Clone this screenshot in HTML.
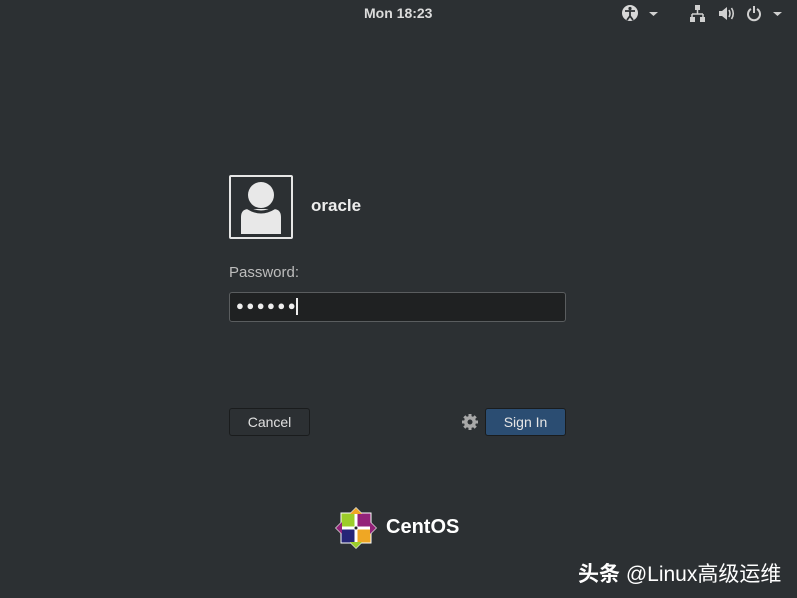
<!DOCTYPE html>
<html><head><meta charset="utf-8"><style>
html,body{margin:0;padding:0}
body{width:797px;height:598px;background:#2c3033;position:relative;overflow:hidden;font-family:"Liberation Sans","DejaVu Sans",sans-serif;color:#eeeeec}
.abs{position:absolute}
.btn{position:absolute;top:408px;width:79px;height:26px;border:1px solid #1a1c1d;border-radius:3px;font-size:14px;text-align:center;line-height:26px;box-sizing:content-box}
</style></head><body>
<div class="abs" style="left:364px;top:5px;font-size:14px;font-weight:bold;color:#dcdcdc">Mon 18:23</div>
<svg class="abs" style="left:620px;top:4px" width="170" height="20" viewBox="0 0 170 20">
 <circle cx="10" cy="9" r="8" fill="#d8d8d8"/>
 <circle cx="10" cy="4.5" r="1.6" fill="#2c3033"/>
 <path d="M5 7h10M10 7v5M10 12l-3 4M10 12l3 4" stroke="#2c3033" stroke-width="1.8" fill="none"/>
 <path d="M29 8h9l-4.5 4z" fill="#d0d0d0"/>
 <rect x="75" y="1" width="5" height="5" fill="#d0d0d0"/>
 <path d="M77.5 6v4M72 10h11M72 10v3M83 10v3" stroke="#d0d0d0" stroke-width="1.5" fill="none"/>
 <rect x="70" y="13" width="5" height="5" fill="#d0d0d0"/><rect x="80" y="13" width="5" height="5" fill="#d0d0d0"/>
 <path d="M99 7h3l5-4v13l-5-4h-3z" fill="#d0d0d0"/>
 <path d="M109 6q2 3.5 0 7M111.5 4q3.5 5.5 0 11" stroke="#d0d0d0" stroke-width="1.6" fill="none"/>
 <path d="M131 5a6 6 0 1 0 6 0" stroke="#d0d0d0" stroke-width="2" fill="none"/>
 <path d="M134 2v7" stroke="#d0d0d0" stroke-width="2"/>
 <path d="M153 8h9l-4.5 4z" fill="#d0d0d0"/>
</svg>
<div class="abs" style="left:229px;top:175px;width:60px;height:60px;border:2px solid #e6e6e6;border-radius:2px;background:#2c3033"></div>
<svg class="abs" style="left:231px;top:177px" width="60" height="60" viewBox="0 0 60 60">
 <circle cx="30" cy="18" r="13" fill="#e8e8e8"/>
 <path d="M10 57v-17q0-8 8-8h24q8 0 8 8v17z" fill="#e8e8e8"/>
 <path d="M17 31q13 8 26 0" stroke="#2c3033" stroke-width="3" fill="none"/>
</svg>
<div class="abs" style="left:311px;top:196px;font-size:17px;font-weight:bold;color:#ededed">oracle</div>
<div class="abs" style="left:229px;top:264px;font-size:15px;color:#bdbdbd">Password:</div>
<div class="abs" style="left:229px;top:292px;width:335px;height:28px;border:1px solid #5a5d5f;border-radius:3px;background:#1f2122"></div>
<div class="abs" style="left:236px;top:297px;font-size:13px;letter-spacing:2.5px;color:#eee;line-height:18px">●●●●●●</div>
<div class="abs" style="left:296px;top:298px;width:2px;height:17px;background:#eee"></div>
<div class="btn" style="left:229px;background:#2c3033;color:#e0e0e0">Cancel</div>
<svg class="abs" style="left:461px;top:413px" width="18" height="18" viewBox="0 0 18 18">
 <g fill="#a8a8a8"><circle cx="9" cy="9" r="6"/>
 <g stroke="#a8a8a8" stroke-width="3"><path d="M9 1v16M1 9h16M3.3 3.3l11.4 11.4M14.7 3.3L3.3 14.7"/></g></g>
 <circle cx="9" cy="9" r="2.5" fill="#2c3033"/>
</svg>
<div class="btn" style="left:485px;background:#2b4d72;color:#e6e6e6">Sign In</div>
<svg class="abs" style="left:334px;top:506px" width="44" height="44" viewBox="0 0 44 44">
 <polygon points="22,1 43,22 22,43 1,22" fill="#ddd"/>
 <rect x="7" y="7" width="14" height="14" fill="#9ccd2a" stroke="#fff" stroke-width="1"/>
 <rect x="23" y="7" width="14" height="14" fill="#932279" stroke="#fff" stroke-width="1"/>
 <rect x="23" y="23" width="14" height="14" fill="#efa724" stroke="#fff" stroke-width="1"/>
 <rect x="7" y="23" width="14" height="14" fill="#262577" stroke="#fff" stroke-width="1"/>
 <polygon points="2,22 8,16 8,28" fill="#932279"/>
 <polygon points="42,22 36,16 36,28" fill="#932279"/>
 <polygon points="22,42 16,36 28,36" fill="#9ccd2a"/>
 <polygon points="22,2 16,8 28,8" fill="#efa724"/>
 <path d="M22 8v28M8 22h28" stroke="#fff" stroke-width="1"/>
 <circle cx="22" cy="22" r="1.5" fill="#222"/>
</svg>
<div class="abs" style="left:386px;top:516px;font-size:20px;font-weight:bold;color:#fff">CentOS</div>
<div class="abs" style="left:578px;top:558px;font-size:21px;color:#fff;font-family:'Liberation Sans','Noto Sans CJK SC',sans-serif;white-space:nowrap"><b>头条</b> @Linux高级运维</div>
</body></html>
